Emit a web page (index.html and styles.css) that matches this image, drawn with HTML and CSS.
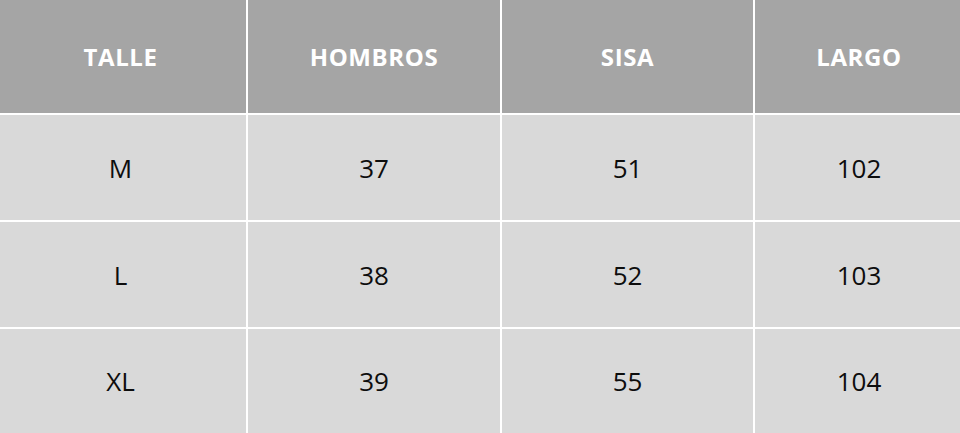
FILE: index.html
```html
<!DOCTYPE html>
<html>
<head>
<meta charset="utf-8">
<link rel="stylesheet" href="styles.css">
</head>
<body>
<div class="table">
  <div class="cell head first">TALLE</div>
  <div class="cell head">HOMBROS</div>
  <div class="cell head">SISA</div>
  <div class="cell head last">LARGO</div>
  <div class="cell first">M</div>
  <div class="cell">37</div>
  <div class="cell">51</div>
  <div class="cell last">102</div>
  <div class="cell first">L</div>
  <div class="cell">38</div>
  <div class="cell">52</div>
  <div class="cell last">103</div>
  <div class="cell first">XL</div>
  <div class="cell">39</div>
  <div class="cell">55</div>
  <div class="cell last">104</div>
</div>
</body>
</html>
```
FILE: styles.css
```css
html, body {
  margin: 0;
  padding: 0;
  background: #ffffff;
}
.table {
  width: 960px;
  height: 433px;
  display: grid;
  grid-template-columns: 246px 252px 251px 205px;
  grid-template-rows: 113px 105px 105px 104px;
  gap: 2px;
  background: #ffffff;
  font-family: "Open Sans", sans-serif;
}
.cell {
  background: #d9d9d9;
  color: #0d0d0d;
  font-size: 26px;
  font-weight: 400;
  display: flex;
  align-items: center;
  justify-content: center;
}
.first {
  padding-right: 5px;
}
.last {
  padding-left: 3px;
}
.head {
  background: #a5a5a5;
  color: #ffffff;
  font-size: 24px;
  font-weight: 700;
  letter-spacing: 0.6px;
}
```
